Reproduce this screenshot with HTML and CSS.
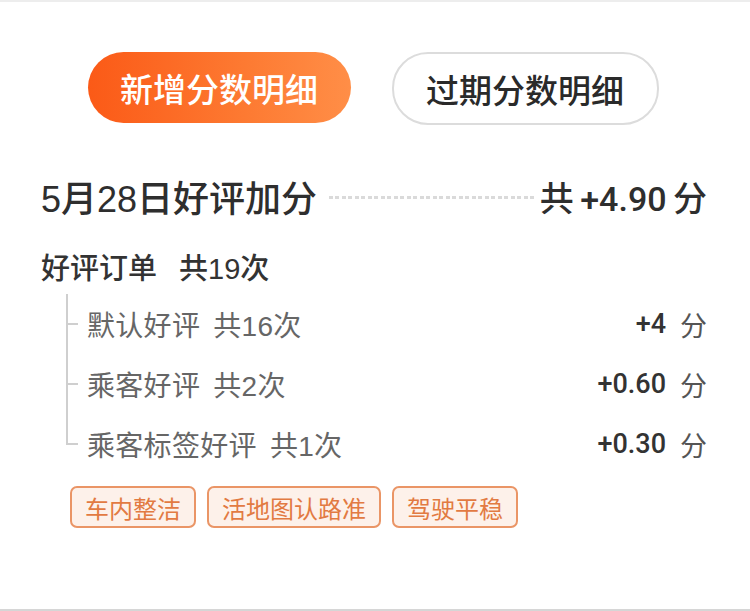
FILE: index.html
```html
<!DOCTYPE html>
<html lang="zh">
<head>
<meta charset="utf-8">
<link rel="stylesheet" href="styles.css">
</head>
<body>
<div class="page">
  <div class="tabs">
    <div class="tab tab-active">新增分数明细</div>
    <div class="tab tab-plain">过期分数明细</div>
  </div>
  <div class="title-row">
    <span class="title">5月28日好评加分</span>
    <span class="dots"></span>
    <span class="total">共 +4.90 分</span>
  </div>
  <div class="sub">好评订单<span class="sub-count">共19次</span></div>
  <div class="tree">
    <div class="row">
      <span class="label">默认好评 共16次</span>
      <span class="val">+4</span><span class="unit">分</span>
    </div>
    <div class="row">
      <span class="label">乘客好评 共2次</span>
      <span class="val">+0.60</span><span class="unit">分</span>
    </div>
    <div class="row row-last">
      <span class="label">乘客标签好评 共1次</span>
      <span class="val">+0.30</span><span class="unit">分</span>
    </div>
  </div>
  <div class="tags">
    <span class="tag">车内整洁</span>
    <span class="tag">活地图认路准</span>
    <span class="tag">驾驶平稳</span>
  </div>
</div>
</body>
</html>
```
FILE: styles.css
```css
* { box-sizing: border-box; }
html, body { margin: 0; padding: 0; background: #fff; }
body {
  font-family: "Liberation Sans", "Noto Sans CJK SC", sans-serif;
  color: #333;
}
.page {
  width: 750px;
  height: 611px;
  border-top: 2px solid #ededed;
  border-bottom: 2px solid #d6d6d6;
  padding: 50px 43px 0 41px;
  overflow: hidden;
}
.tabs {
  display: flex;
  justify-content: center;
  gap: 41px;
  margin-left: -2px;
}
.tab {
  height: 71px;
  border-radius: 36px;
  display: flex;
  align-items: center;
  justify-content: center;
  font-family: "Noto Sans CJK SC", sans-serif;
  font-size: 33px;
  font-weight: 500;
}
.tab-active {
  width: 263px;
  background: linear-gradient(90deg, #fb5a17 0%, #fd7a32 60%, #ff8e47 100%);
  color: #fff;
}
.tab-plain {
  width: 267px;
  height: 73px;
  border: 2px solid #dcdcdc;
  color: #2a2a2a;
}
.title-row {
  display: flex;
  align-items: center;
  height: 50px;
  margin-top: 46px;
}
.title {
  font-size: 36px;
  font-weight: 500;
  color: #2e2e2e;
}
.dots {
  flex: 1;
  height: 3px;
  margin: 2px 6px 0 12px;
  background: repeating-linear-gradient(90deg, #dadada 0 4px, transparent 4px 6.5px);
}
.total {
  font-size: 34px;
  font-weight: 500;
  color: #2e2e2e;
  font-family: "Roboto", "Noto Sans CJK SC", sans-serif;
  word-spacing: -2px;
}
.sub {
  margin-top: 28px;
  height: 40px;
  line-height: 40px;
  font-size: 29px;
  font-weight: 500;
  color: #333;
}
.sub-count { margin-left: 22px; }
.tree {
  margin-top: 5px;
  margin-left: 25px;
}
.row {
  position: relative;
  height: 60px;
  display: flex;
  align-items: center;
  padding-left: 21px;
}
.row::before {
  content: "";
  position: absolute;
  left: 0;
  top: 0;
  bottom: 0;
  width: 2px;
  background: #cfcfcf;
}
.row-last::before { bottom: 29px; }
.row::after {
  content: "";
  position: absolute;
  left: 0;
  top: 29px;
  width: 12px;
  height: 2px;
  background: #cfcfcf;
}
.label {
  flex: 1;
  font-size: 28px;
  color: #666;
  word-spacing: 5px;
  letter-spacing: 0.3px;
}
.val {
  font-family: "Roboto", sans-serif;
  font-size: 27px;
  font-weight: 500;
  color: #333;
}
.unit {
  margin-left: 14px;
  font-family: "Noto Sans CJK SC", sans-serif;
  font-size: 27px;
  color: #555;
}
.tags {
  display: flex;
  gap: 11px;
  margin-top: 12px;
  margin-left: 29px;
}
.tag {
  height: 42px;
  padding: 0 13px;
  display: flex;
  align-items: center;
  border: 2px solid #ea9566;
  border-radius: 7px;
  background: #fdf1ea;
  color: #e27a42;
  font-family: "Noto Sans CJK SC", sans-serif;
  font-size: 24px;
}
```
